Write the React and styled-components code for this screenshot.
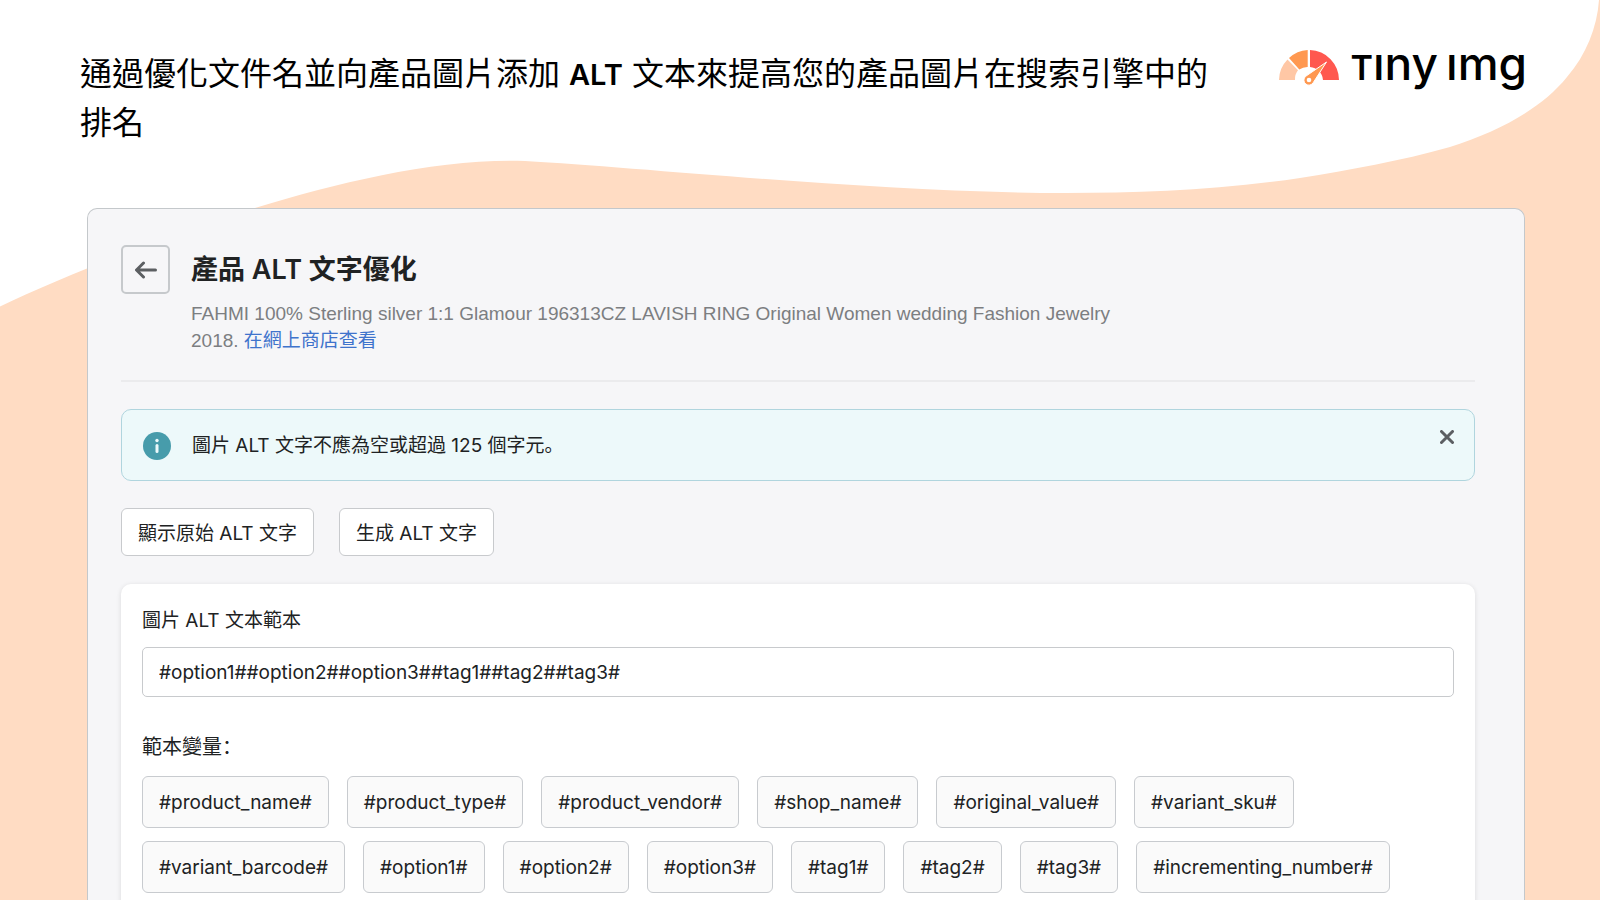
import React, { useState } from 'react';
import styled, { createGlobalStyle } from 'styled-components';

const variables = [
  '#product_name#',
  '#product_type#',
  '#product_vendor#',
  '#shop_name#',
  '#original_value#',
  '#variant_sku#',
  '#variant_barcode#',
  '#option1#',
  '#option2#',
  '#option3#',
  '#tag1#',
  '#tag2#',
  '#tag3#',
  '#incrementing_number#',
];

const App = () => {
  const [template, setTemplate] = useState('#option1##option2##option3##tag1##tag2##tag3#');

  return (
    <Page>
      <GlobalStyle />
      <Wave viewBox="0 0 1600 307" preserveAspectRatio="none" aria-hidden="true">
        <path d="M0 0H1599C1597 28 1586 55 1567 77C1542 108 1500 131 1450 147C1400 161 1350 170 1300 178C1220 190 1140 193 1066 193C880 193 650 168 525 161C440 158 340 182 255 208C150 241 60 278 0 306.500Z" />
      </Wave>
      <Header>
        <Headline>
          通過優化文件名並向產品圖片添加 <strong>ALT</strong> 文本來提高您的產品圖片在搜索引擎中的排名
        </Headline>
        <Logo href="#">
          <Gauge viewBox="0 0 60 36" aria-hidden="true">
            <path fill="#ffc7a5" d="M0 30A30 30 0 0 1 8.500 9.600L19 20.300A14 14 0 0 0 16 30Z" />
            <path fill="#ff9850" d="M10 8A30 30 0 0 1 28.700 0V17A14 14 0 0 0 20.300 19.500Z" />
            <path fill="#ff584f" d="M31 0A30 30 0 0 1 60 30H44A14 14 0 0 0 31 17Z" />
            <path fill="#ff9850" stroke="#fff" strokeWidth="1" d="M47.500 12L34.300 32.500A5 5 0 1 1 26.700 26.300Z" />
            <circle cx="30" cy="30" r="2.300" fill="#fff" />
          </Gauge>
          <Wordmark>
            <span>
              <SmallCap>T</SmallCap>ıny
            </span>
            <span>ımg</span>
          </Wordmark>
        </Logo>
      </Header>
      <Panel>
        <TitleBar>
          <BackButton type="button" aria-label="返回">
            <svg width="22" height="18" viewBox="0 0 22 18" aria-hidden="true">
              <path d="M8.500 2L1.500 9L8.500 16M2 9H20.500" />
            </svg>
          </BackButton>
          <TitleText>
            <Title>產品 ALT 文字優化</Title>
            <Subtitle>
              FAHMI 100% Sterling silver 1:1 Glamour 196313CZ LAVISH RING Original Women wedding Fashion Jewelry 2018.{' '}
              <StoreLink href="#">在網上商店查看</StoreLink>
            </Subtitle>
          </TitleText>
        </TitleBar>
        <Banner role="status">
          <InfoIcon viewBox="0 0 28 28" aria-hidden="true">
            <circle cx="14" cy="14" r="14" fill="#479cab" />
            <circle cx="14" cy="8.500" r="1.700" fill="#ebf9fb" />
            <path d="M14 13.500V19.500" stroke="#ebf9fb" strokeWidth="3" strokeLinecap="round" />
          </InfoIcon>
          <BannerText>圖片 ALT 文字不應為空或超過 125 個字元。</BannerText>
          <CloseButton type="button" aria-label="關閉">
            <svg width="14" height="14" viewBox="0 0 14 14" aria-hidden="true">
              <path d="M1.500 1.500L12.500 12.500M12.500 1.500L1.500 12.500" />
            </svg>
          </CloseButton>
        </Banner>
        <Actions>
          <ActionButton type="button">顯示原始 ALT 文字</ActionButton>
          <ActionButton type="button">生成 ALT 文字</ActionButton>
        </Actions>
        <Card>
          <Label htmlFor="alt-template">圖片 ALT 文本範本</Label>
          <TemplateInput
            id="alt-template"
            type="text"
            value={template}
            onChange={(e) => setTemplate(e.target.value)}
          />
          <VariablesTitle>範本變量：</VariablesTitle>
          <Variables>
            {variables.map((name) => (
              <Variable key={name} type="button" onClick={() => setTemplate(template + name)}>
                {name}
              </Variable>
            ))}
          </Variables>
        </Card>
      </Panel>
    </Page>
  );
};

const GlobalStyle = createGlobalStyle`
  * {
    box-sizing: border-box;
  }

  body {
    margin: 0;
    background: #ffdcc3;
    color: #202223;
    font-family: Inter, 'Noto Sans CJK TC', sans-serif;
  }

  button,
  input {
    font-family: inherit;
    color: inherit;
  }
`;

const Page = styled.div`
  position: relative;
  height: 100vh;
  overflow: hidden;
  display: flex;
  flex-direction: column;
`;

const Wave = styled.svg`
  position: absolute;
  top: 0;
  left: 0;
  width: 100%;
  height: 307px;
  fill: #fff;
`;

const Header = styled.header`
  position: relative;
  display: flex;
  justify-content: space-between;
  align-items: flex-start;
  padding: 50px 73px 0 80px;
  height: 208px;
  flex-shrink: 0;
`;

const Headline = styled.h1`
  margin: 0;
  max-width: 1130px;
  font-size: 32px;
  font-weight: 400;
  line-height: 48px;
  color: #000;

  strong {
    font-size: 29px;
    font-weight: 600;
  }
`;

const Logo = styled.a`
  display: flex;
  gap: 12px;
  color: #000;
  text-decoration: none;
`;

const Gauge = styled.svg`
  width: 60px;
  height: 36px;
`;

const Wordmark = styled.span`
  display: flex;
  gap: 8px;
  font-size: 46px;
  font-weight: 500;
  line-height: 26px;
  white-space: nowrap;
`;

const SmallCap = styled.span`
  font-size: 34px;
  font-weight: 600;
`;

const Panel = styled.main`
  position: relative;
  flex: 1;
  margin: 0 75px 0 87px;
  padding: 36px 49px 0 33px;
  font-family: Inter, 'Noto Sans CJK SC', sans-serif;
  background: #f6f6f8;
  border: 1px solid #c4c8cb;
  border-bottom: 0;
  border-radius: 10px 10px 0 0;
`;

const TitleBar = styled.div`
  display: flex;
  gap: 21px;
  padding-bottom: 26px;
  border-bottom: 2px solid #ebebed;
`;

const BackButton = styled.button`
  display: flex;
  align-items: center;
  justify-content: center;
  width: 49px;
  height: 49px;
  padding: 0;
  background: none;
  border: 2px solid #c6c9cc;
  border-radius: 5px;

  svg {
    fill: none;
    stroke: #5c5f62;
    stroke-width: 3;
    stroke-linecap: round;
    stroke-linejoin: round;
  }
`;

const TitleText = styled.div`
  max-width: 940px;
`;

const Title = styled.h2`
  margin: 0 0 5px;
  font-size: 27px;
  font-weight: 600;
  line-height: 50px;
`;

const Subtitle = styled.p`
  margin: 0;
  font-family: 'Liberation Sans', 'Noto Sans CJK SC', sans-serif;
  font-size: 19px;
  line-height: 27px;
  color: #7c7e81;
`;

const StoreLink = styled.a`
  color: #3f73cc;
  text-decoration: none;
`;

const Banner = styled.div`
  display: flex;
  align-items: center;
  gap: 21px;
  height: 72px;
  margin-top: 27px;
  padding: 2px 20px 0 21px;
  background: #edf9fa;
  border: 1px solid #b0d5de;
  border-radius: 10px;
`;

const InfoIcon = styled.svg`
  width: 28px;
  height: 28px;
`;

const BannerText = styled.p`
  flex: 1;
  margin: 0;
  font-size: 19px;
  line-height: 28px;
`;

const CloseButton = styled.button`
  display: flex;
  align-self: flex-start;
  margin-top: 18px;
  padding: 0;
  background: none;
  border: 0;

  svg {
    fill: none;
    stroke: #5c5f62;
    stroke-width: 3;
    stroke-linecap: round;
  }
`;

const Actions = styled.div`
  display: flex;
  gap: 25px;
  margin: 27px 0 28px;
`;

const ActionButton = styled.button`
  height: 48px;
  padding: 0 16px 2px;
  font-size: 19px;
  background: #fff;
  border: 1px solid #c8cacd;
  border-radius: 6px;
`;

const Card = styled.section`
  min-height: 400px;
  padding: 22px 21px;
  background: #fff;
  border-radius: 10px;
  box-shadow: 0 1px 5px rgba(23, 24, 24, 0.12);
`;

const Label = styled.label`
  display: block;
  font-size: 19px;
  line-height: 30px;
`;

const TemplateInput = styled.input`
  display: block;
  width: 100%;
  height: 50px;
  margin: 11px 0 35px;
  padding: 0 16px;
  font-size: 19px;
  background: #fff;
  border: 1px solid #c8cacd;
  border-radius: 5px;
`;

const VariablesTitle = styled.h3`
  margin: 0 0 14px;
  font-size: 20px;
  font-weight: 400;
  line-height: 30px;
`;

const Variables = styled.div`
  display: flex;
  flex-wrap: wrap;
  gap: 13px 18px;
`;

const Variable = styled.button`
  height: 52px;
  padding: 0 16px;
  font-size: 19px;
  background: #fafafa;
  border: 1px solid #c8cbcf;
  border-radius: 6px;
`;

export default App;
